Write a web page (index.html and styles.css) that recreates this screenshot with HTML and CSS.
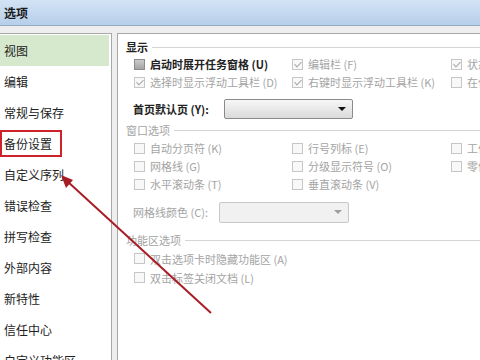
FILE: index.html
```html
<!DOCTYPE html>
<html lang="zh-CN">
<head>
  <meta charset="UTF-8" />
  <meta name="viewport" content="width=device-width, initial-scale=1.0"/>
  <title>选项</title>
  <link rel="stylesheet" href="styles.css">
</head>
<body>

<div class="window">
  <div class="titlebar">选项</div>

  <div class="dialog">
    <!-- 左侧分类 -->
    <ul class="nav">
      <li class="nav-item active">视图</li>
      <li class="nav-item">编辑</li>
      <li class="nav-item">常规与保存</li>
      <li class="nav-item marked">备份设置</li>
      <li class="nav-item">自定义序列</li>
      <li class="nav-item">错误检查</li>
      <li class="nav-item">拼写检查</li>
      <li class="nav-item">外部内容</li>
      <li class="nav-item">新特性</li>
      <li class="nav-item">信任中心</li>
      <li class="nav-item">自定义功能区</li>
    </ul>

    <!-- 右侧设置 -->
    <div class="pane">
      <div class="group-title dark">显示</div>
      <div class="check-grid sec-display">
        <div class="check dark"><span class="box mixed"></span>启动时展开任务窗格 (U)</div>
        <div class="check"><span class="box checked"></span>编辑栏 (F)</div>
        <div class="check"><span class="box checked"></span>状态栏 (S)</div>
        <div class="check"><span class="box checked"></span>选择时显示浮动工具栏 (D)</div>
        <div class="check"><span class="box checked"></span>右键时显示浮动工具栏 (K)</div>
        <div class="check"><span class="box"></span>在任务栏中显示所有窗口 (W)</div>
      </div>

      <div class="field sec-home">
        <span class="field-label dark">首页默认页 (Y):</span>
        <span class="select"></span>
      </div>

      <div class="group-title sec-window">窗口选项</div>
      <div class="check-grid sec-window-rows">
        <div class="check"><span class="box"></span>自动分页符 (K)</div>
        <div class="check"><span class="box"></span>行号列标 (E)</div>
        <div class="check"><span class="box"></span>工作表标签 (B)</div>
        <div class="check"><span class="box"></span>网格线 (G)</div>
        <div class="check"><span class="box"></span>分级显示符号 (O)</div>
        <div class="check"><span class="box"></span>零值 (Z)</div>
        <div class="check"><span class="box"></span>水平滚动条 (T)</div>
        <div class="check"><span class="box"></span>垂直滚动条 (V)</div>
      </div>

      <div class="field sec-color">
        <span class="field-label short">网格线颜色 (C):</span>
        <span class="select disabled"></span>
      </div>

      <div class="group-title sec-ribbon">功能区选项</div>
      <div class="check-list sec-ribbon-rows">
        <div class="check"><span class="box"></span>双击选项卡时隐藏功能区 (A)</div>
        <div class="check"><span class="box"></span>双击标签关闭文档 (L)</div>
      </div>
    </div>
  </div>

  <!-- 标注箭头 -->
  <svg class="annotation" width="480" height="360" viewBox="0 0 480 360">
    <line x1="211" y1="313" x2="67" y2="181" stroke="#a81d25" stroke-width="2"/>
    <polygon points="61,175 73,180 66,188" fill="#a81d25"/>
  </svg>
</div>

</body>
</html>
```

FILE: styles.css
```css
body {
  margin: 0;
  font-family: "Noto Sans CJK SC", "Liberation Sans", sans-serif;
  background-color: #fff;
  overflow: hidden;
}

.window {
  position: relative;
  width: 480px;
  height: 360px;
  overflow: hidden;
  background-color: #eeeeee;
}

.titlebar {
  height: 25px;
  line-height: 25px;
  padding-left: 4px;
  font-size: 12px;
  font-weight: bold;
  color: #1b1b1b;
  background: linear-gradient(#d2e3f5, #b7cfea);
  border-bottom: 1px solid #93aac5;
}

.dialog {
  display: flex;
  gap: 5px;
  padding-top: 7px;
  height: 334px;
  box-sizing: border-box;
}

/* 左侧分类 */
.nav {
  flex: none;
  width: 112px;
  margin: 0;
  padding: 1px 0 0;
  list-style: none;
  background-color: #fff;
  border-top: 1px solid #a8a8a8;
  border-right: 1px solid #a8a8a8;
  box-sizing: border-box;
}

.nav-item {
  position: relative;
  height: 31px;
  line-height: 31px;
  margin-right: 2px;
  padding-left: 4px;
  font-size: 12px;
  color: #222;
}

.nav-item.active {
  background-color: #d7e9cd;
}

.nav-item.marked::after {
  content: "";
  position: absolute;
  left: 0;
  top: 2px;
  width: 62px;
  height: 27px;
  box-sizing: border-box;
  border: 2px solid #cc2229;
}

/* 右侧设置 */
.pane {
  flex: 1;
  padding: 6px 0 0 8px;
  background-color: #fff;
  border-top: 1px solid #a8a8a8;
  border-left: 1px solid #a8a8a8;
  overflow: hidden;
  white-space: nowrap;
  font-size: 11px;
  color: #a4a4a4;
}

.dark {
  color: #222;
  font-weight: bold;
}

.group-title {
  display: flex;
  align-items: center;
  height: 14px;
}

.group-title::after {
  content: "";
  flex: 1;
  margin-left: 4px;
  border-top: 1px solid #d4d4d4;
}

.check-grid {
  display: grid;
  grid-template-columns: 158px 159px 1fr;
  margin-left: 8px;
}

.check-list {
  margin-left: 8px;
}

.check {
  display: flex;
  align-items: center;
  gap: 5px;
  height: 18px;
}

.box {
  position: relative;
  flex: none;
  width: 11px;
  height: 11px;
  box-sizing: border-box;
  border: 1px solid #c6c6c6;
  background-color: #f8f8f8;
}

.box.checked::after {
  content: "";
  position: absolute;
  left: 3px;
  top: 0;
  width: 3px;
  height: 6px;
  border: solid #a9a9a9;
  border-width: 0 1.5px 1.5px 0;
  transform: rotate(45deg);
}

.box.mixed {
  border-color: #8c8c8c;
  background: linear-gradient(#cbcbcb, #a4a4a4);
}

.field {
  display: flex;
  align-items: center;
  height: 22px;
  margin-left: 7px;
}

.field-label {
  width: 91px;
}

.field-label.short {
  width: 86px;
}

.select {
  display: flex;
  justify-content: flex-end;
  align-items: center;
  width: 129px;
  height: 20px;
  padding-right: 6px;
  box-sizing: border-box;
  border: 1px solid #8a8a8a;
  border-radius: 2px;
  background: linear-gradient(#f7f7f7, #dadada);
}

.select::after {
  content: "";
  border-left: 4px solid transparent;
  border-right: 4px solid transparent;
  border-top: 4px solid #111;
}

.select.disabled {
  width: 130px;
  height: 21px;
  border-color: #c8c8c8;
  background: #f1f1f1;
}

.select.disabled::after {
  border-top-color: #a0a0a0;
}

/* 各区块间距 */
.sec-display { margin-top: 1px; }
.sec-home { margin-top: 7px; }
.sec-window { margin-top: 3px; }
.sec-window-rows { margin-top: 2px; }
.sec-color { margin-top: 8px; }
.sec-ribbon { margin-top: 10px; }
.sec-ribbon-rows { margin-top: 2px; }

.sec-ribbon-rows .check {
  height: 19px;
}

.annotation {
  position: absolute;
  left: 0;
  top: 0;
  pointer-events: none;
}
```
